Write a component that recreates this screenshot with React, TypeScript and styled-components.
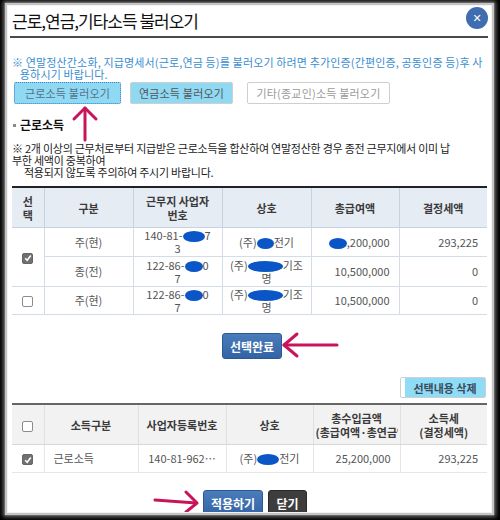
import React from "react";
import styled, { createGlobalStyle } from "styled-components";

const GlobalStyle = createGlobalStyle`
  html, body {
    margin: 0;
    padding: 0;
    background: #000;
  }
  body {
    width: 500px;
    height: 520px;
    overflow: hidden;
    font-family: "Noto Sans CJK KR", "Noto Sans", sans-serif;
  }
`;

const Frame = styled.div`
  width: 500px;
  height: 520px;
  background: #000;
  padding: 6px 9px 8px 8px;
  box-sizing: border-box;
`;

const Dialog = styled.div`
  position: relative;
  width: 483px;
  height: 506px;
  background: #fff;
  box-shadow: 0 0 0 1px #f2f2f2, 0 0 1px 3px #c4c4c4, 0 0 4px 5px #6a6a6a;
  padding: 0 4px;
  box-sizing: border-box;
  overflow: hidden;
`;

const Header = styled.div`
  display: flex;
  justify-content: space-between;
  align-items: flex-start;
  height: 30px;
  margin: 0 -1px 0 -2px;
  padding-left: 2px;
  border-bottom: 2px solid #4a4a4a;
`;

const Title = styled.h1`
  margin: 5px 0 0;
  font-size: 17px;
  font-weight: 400;
  letter-spacing: -1px;
  color: #111;
  line-height: 19px;
`;

const CloseBtn = styled.button`
  width: 22px;
  height: 22px;
  margin-top: 1px;
  border: none;
  border-radius: 50%;
  background: #3f6db0;
  color: #fff;
  font-size: 11px;
  font-weight: 700;
  padding: 0;
  display: flex;
  align-items: center;
  justify-content: center;
  font-family: "DejaVu Sans", sans-serif;
`;

const Info = styled.p`
  margin: 18px 0 0;
  font-size: 11px;
  line-height: 12px;
  letter-spacing: 0.15px;
  color: #3a8ed0;
  white-space: nowrap;
`;

const LoadRow = styled.div`
  display: flex;
  gap: 9px;
  margin: 2px 0 0 2px;
`;

const LoadBtn = styled.button<{ $mark?: boolean; $focus?: boolean; $off?: boolean }>`
  height: 22px;
  padding: 0;
  box-sizing: border-box;
  font-family: inherit;
  font-size: 11px;
  letter-spacing: 0.2px;
  color: ${(p) => (p.$off ? "#9a9a9a" : p.$focus ? "#56708a" : "#555")};
  background: ${(p) => (p.$mark ? "#8fd9f3" : "#fff")};
  border: ${(p) => (p.$focus ? "1px dotted #3a7fc0" : "1px solid #cfcfcf")};
  border-radius: 2px;
  ${(p) => (p.$off ? "margin-left: 5px;" : "")}
`;

const Section = styled.h2`
  display: flex;
  align-items: center;
  gap: 4px;
  margin: 14px 0 0 1px;
  font-size: 12px;
  font-weight: 700;
  color: #111;
  line-height: 14px;
  &::before {
    content: "";
    width: 3px;
    height: 3px;
    background: #888;
  }
`;

const Notice = styled.p`
  margin: 10px 0 0;
  font-size: 11px;
  line-height: 12px;
  letter-spacing: -0.25px;
  color: #222;
  white-space: nowrap;
`;

const Indent = styled.span`
  padding-left: 12px;
`;

const Table = styled.table<{ $head: string }>`
  width: 100%;
  margin-top: 8px;
  border-collapse: collapse;
  table-layout: fixed;
  border-top: 2px solid ${(p) => (p.$head === "blue" ? "#222" : "#666")};
  font-size: 11px;
  color: #555;

  th {
    background: ${(p) => (p.$head === "blue" ? "#e6ecf4" : "#f2f2f2")};
    font-weight: 700;
    color: #3a3a3a;
    height: 39px;
    line-height: 14px;
    padding: 0 2px;
    border-right: 1px solid ${(p) => (p.$head === "blue" ? "#c8d3e1" : "#e0e0e0")};
    border-bottom: 1px solid ${(p) => (p.$head === "blue" ? "#c8d3e1" : "#d8d8d8")};
    overflow: hidden;
  }
  td {
    line-height: 13px;
    padding: 0 3px;
    border-right: 1px solid ${(p) => (p.$head === "blue" ? "#d4dce8" : "#e6e6e6")};
    border-bottom: 1px solid ${(p) => (p.$head === "blue" ? "#d4dce8" : "#e6e6e6")};
    text-align: center;
  }
  th:last-child,
  td:last-child {
    border-right: none;
  }
`;

const Row = styled.tr<{ $h: number }>`
  height: ${(p) => p.$h}px;
`;

const Num = styled.td`
  && {
    text-align: right;
    padding-right: 9px;
  }
`;

const LeftCell = styled.td`
  && {
    text-align: left;
    padding-left: 9px;
  }
`;

const Clip = styled.span`
  display: block;
  white-space: nowrap;
  overflow: hidden;
`;

const Redact = styled.span<{ $w: number }>`
  display: inline-block;
  width: ${(p) => p.$w}px;
  height: 11px;
  border-radius: 50%;
  background: #0b56c6;
  vertical-align: -2px;
`;

const Box = styled.span<{ $on?: boolean }>`
  display: inline-flex;
  align-items: center;
  justify-content: center;
  width: 11px;
  height: 11px;
  box-sizing: border-box;
  border-radius: 2px;
  border: 1px solid ${(p) => (p.$on ? "#666" : "#8c8c8c")};
  background: ${(p) => (p.$on ? "#707070" : "#fff")};
  vertical-align: middle;
`;

const CenterRow = styled.div`
  display: flex;
  justify-content: center;
  padding-left: 5px;
  margin-top: 18px;
`;

const BlueBtn = styled.button<{ $w: number }>`
  width: ${(p) => p.$w}px;
  height: 26px;
  padding: 0;
  font-family: inherit;
  font-size: 12px;
  font-weight: 700;
  color: #fff;
  background: linear-gradient(#4a7cbc, #3363a4);
  border: 1px solid #2b5794;
  border-radius: 3px;
`;

const DarkBtn = styled(BlueBtn)`
  background: #3d3d3d;
  border-color: #2a2a2a;
`;

const RightRow = styled.div`
  display: flex;
  justify-content: flex-end;
  margin: 18px 1px 0 0;
`;

const DeleteBtn = styled.button`
  width: 86px;
  height: 21px;
  padding: 0 0 0 4px;
  box-sizing: border-box;
  font-family: inherit;
  font-size: 11px;
  font-weight: 700;
  color: #3b4a5a;
  border: 1px solid #cfcfcf;
  border-radius: 2px;
  background: linear-gradient(90deg, #fff 0 4px, #8fdcf6 4px);
`;

const BottomRow = styled.div`
  display: flex;
  justify-content: center;
  gap: 5px;
  padding-left: 11px;
  margin-top: 17px;
`;

const Overlay = styled.svg`
  position: absolute;
  left: 0;
  top: 0;
  pointer-events: none;
`;

const CheckMark = () => (
  <svg width="8" height="8" viewBox="0 0 8 8">
    <path d="M1.2 4.2 L3.2 6.2 L6.8 1.6" fill="none" stroke="#fff" strokeWidth="1.6" />
  </svg>
);

export default function App() {
  return (
    <Frame>
      <GlobalStyle />
      <Dialog>
        <Header>
          <Title>근로,연금,기타소득 불러오기</Title>
          <CloseBtn>✕</CloseBtn>
        </Header>

        <Info>
          ※ 연말정산간소화, 지급명세서(근로,연금 등)를 불러오기 하려면 추가인증(간편인증, 공동인증 등)후 사
          <br />
          &nbsp;&nbsp;&nbsp;용하시기 바랍니다.
        </Info>

        <LoadRow>
          <LoadBtn $mark $focus style={{ width: 107 }}>
            근로소득 불러오기
          </LoadBtn>
          <LoadBtn $mark style={{ width: 103 }}>
            연금소득 불러오기
          </LoadBtn>
          <LoadBtn $off style={{ width: 143 }}>
            기타(종교인)소득 불러오기
          </LoadBtn>
        </LoadRow>

        <Section>근로소득</Section>

        <Notice>
          ※ 2개 이상의 근무처로부터 지급받은 근로소득을 합산하여 연말정산한 경우 종전 근무지에서 이미 납
          <br />
          부한 세액이 중복하여
          <br />
          <Indent>적용되지 않도록 주의하여 주시기 바랍니다.</Indent>
        </Notice>

        <Table $head="blue">
          <colgroup>
            <col style={{ width: 32 }} />
            <col style={{ width: 89 }} />
            <col style={{ width: 89 }} />
            <col style={{ width: 89 }} />
            <col style={{ width: 88 }} />
            <col />
          </colgroup>
          <thead>
            <tr>
              <th>
                선<br />택
              </th>
              <th>구분</th>
              <th>
                근무지 사업자
                <br />
                번호
              </th>
              <th>상호</th>
              <th>총급여액</th>
              <th>결정세액</th>
            </tr>
          </thead>
          <tbody>
            <Row $h={29}>
              <td rowSpan={2}>
                <Box $on>
                  <CheckMark />
                </Box>
              </td>
              <td>주(현)</td>
              <td>
                140-81-
                <Redact $w={22} />7
                <br />3
              </td>
              <td>
                (주)
                <Redact $w={17} />
                전기
              </td>
              <Num>
                <Redact $w={18} />
                ,200,000
              </Num>
              <Num>293,225</Num>
            </Row>
            <Row $h={30}>
              <td>종(전)</td>
              <td>
                122-86-
                <Redact $w={18} />0
                <br />7
              </td>
              <td>
                (주)
                <Redact $w={35} />
                기조
                <br />명
              </td>
              <Num>10,500,000</Num>
              <Num>0</Num>
            </Row>
            <Row $h={28}>
              <td>
                <Box />
              </td>
              <td>주(현)</td>
              <td>
                122-86-
                <Redact $w={18} />0
                <br />7
              </td>
              <td>
                (주)
                <Redact $w={35} />
                기조
                <br />명
              </td>
              <Num>10,500,000</Num>
              <Num>0</Num>
            </Row>
          </tbody>
        </Table>

        <CenterRow>
          <BlueBtn $w={60}>선택완료</BlueBtn>
        </CenterRow>

        <RightRow>
          <DeleteBtn>선택내용 삭제</DeleteBtn>
        </RightRow>

        <Table $head="grey" style={{ marginTop: 5 }}>
          <colgroup>
            <col style={{ width: 32 }} />
            <col style={{ width: 94 }} />
            <col style={{ width: 88 }} />
            <col style={{ width: 87 }} />
            <col style={{ width: 87 }} />
            <col />
          </colgroup>
          <thead>
            <tr>
              <th>
                <Box />
              </th>
              <th>소득구분</th>
              <th>사업자등록번호</th>
              <th>상호</th>
              <th>
                <Clip>총수입금액</Clip>
                <Clip>(총급여액·총연금액)</Clip>
              </th>
              <th>
                소득세
                <br />
                (결정세액)
              </th>
            </tr>
          </thead>
          <tbody>
            <Row $h={28}>
              <td>
                <Box $on>
                  <CheckMark />
                </Box>
              </td>
              <LeftCell>근로소득</LeftCell>
              <td>140-81-962…</td>
              <td>
                (주)
                <Redact $w={22} />
                전기
              </td>
              <Num>25,200,000</Num>
              <Num>293,225</Num>
            </Row>
          </tbody>
        </Table>

        <BottomRow>
          <BlueBtn $w={60}>적용하기</BlueBtn>
          <DarkBtn $w={39}>닫기</DarkBtn>
        </BottomRow>

        <Overlay width="483" height="506" viewBox="0 0 483 506">
          <g fill="none" stroke="#c8145a" strokeWidth="3" strokeLinecap="round" strokeLinejoin="round">
            <path d="M77 102 L77 134" />
            <path d="M66 113 L77 102 L88 113" />
            <path d="M276 339 L329 339" />
            <path d="M289 328 L276 339 L289 350" />
            <path d="M147 494 L188 497" />
            <path d="M178 486 L189 497 L178 506" />
          </g>
        </Overlay>
      </Dialog>
    </Frame>
  );
}
